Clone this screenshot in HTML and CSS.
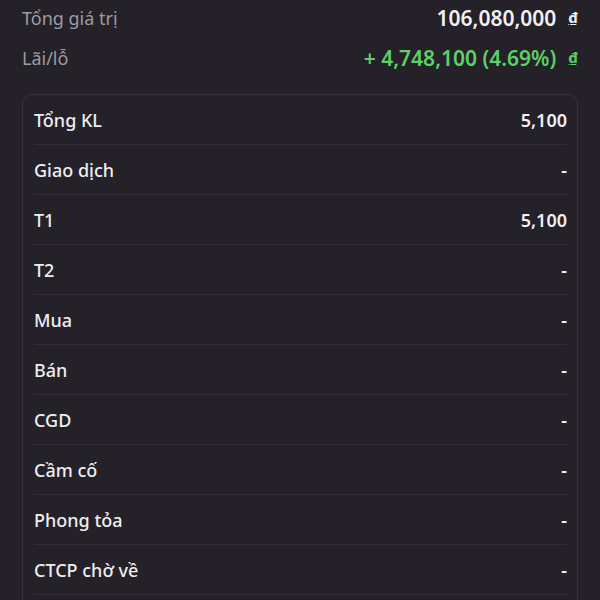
FILE: index.html
```html
<!DOCTYPE html>
<html lang="vi">
<head>
    <meta charset="UTF-8">
    <title>Chi tiết tài sản</title>
    <link rel="stylesheet" href="styles.css">
</head>
<body>
    <div class="page">
        <div class="summary">
            <div class="sum-row">
                <span class="sum-label">Tổng giá trị</span>
                <span class="sum-value">106,080,000 <span class="cur">₫</span></span>
            </div>
            <div class="sum-row">
                <span class="sum-label">Lãi/lỗ</span>
                <span class="sum-value up">+ 4,748,100 (4.69%) <span class="cur">₫</span></span>
            </div>
        </div>

        <div class="card">
            <div class="row"><span class="label">Tổng KL</span><span class="value">5,100</span></div>
            <div class="row"><span class="label">Giao dịch</span><span class="value">-</span></div>
            <div class="row"><span class="label">T1</span><span class="value">5,100</span></div>
            <div class="row"><span class="label">T2</span><span class="value">-</span></div>
            <div class="row"><span class="label">Mua</span><span class="value">-</span></div>
            <div class="row"><span class="label">Bán</span><span class="value">-</span></div>
            <div class="row"><span class="label">CGD</span><span class="value">-</span></div>
            <div class="row"><span class="label">Cầm cố</span><span class="value">-</span></div>
            <div class="row"><span class="label">Phong tỏa</span><span class="value">-</span></div>
            <div class="row"><span class="label">CTCP chờ về</span><span class="value">-</span></div>
        </div>
    </div>
</body>
</html>
```

FILE: styles.css
```css
html, body { margin: 0; background-color: #242128; }
body { font-family: "Noto Sans", "Open Sans", sans-serif; color: #ecebee; overflow: hidden; height: 600px; }
.page { padding: 0 22px; margin-top: -2px; }

.summary { display: flex; flex-direction: column; }
.sum-row { display: flex; justify-content: space-between; align-items: center; height: 40px; }
.sum-label { font-size: 18px; color: #9d9ba2; }
.sum-value { font-size: 21px; font-weight: 600; color: #f1f0f3; display: flex; align-items: center; gap: 12px; }
.sum-value.up { color: #5ecf66; }
.cur { font-size: 15px; font-weight: 700; text-decoration: underline; position: relative; top: -1px; }

.card { margin-top: 16px; border: 1px solid #35323a; border-radius: 9px; padding: 0 10px 40px 11px; }
.row { display: flex; justify-content: space-between; align-items: center; height: 49px; border-bottom: 1px solid #322f37; }
.label { font-size: 18px; font-weight: 500; color: #eeedf0; }
.value { font-size: 18px; font-weight: 600; color: #f1f0f3; }
```
